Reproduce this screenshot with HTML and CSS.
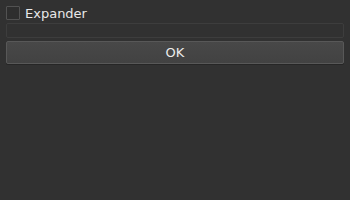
FILE: index.html
```html
<!DOCTYPE html>
<html>
<head>
    <title>Expander</title>
    <link rel="stylesheet" href="styles.css">
</head>
<body>
    <div class="window">
        <label class="expander">
            <span class="check"></span>
            <span class="label">Expander</span>
        </label>
        <div class="frame"></div>
        <button type="button" class="ok">OK</button>
    </div>
</body>
</html>
```

FILE: styles.css
```css
body {
    margin: 0;
    padding: 0;
    background-color: #313131;
    font-family: "DejaVu Sans", sans-serif;
    font-size: 13px;
    color: #e8e8e8;
}

.window {
    width: 350px;
    height: 200px;
    box-sizing: border-box;
    padding: 6px 6px 0 6px;
    display: flex;
    flex-direction: column;
}

.expander {
    display: flex;
    align-items: center;
    gap: 5px;
    height: 14px;
}

.check {
    width: 12px;
    height: 12px;
    border: 1px solid #525252;
    border-radius: 1px;
    background-color: #2e2e2e;
}

.label {
    line-height: 14px;
    padding-top: 1px;
}

.frame {
    margin-top: 3px;
    height: 13px;
    border: 1px solid #3d3d3d;
    border-radius: 2px;
}

.ok {
    margin-top: 3px;
    height: 23px;
    border: 1px solid #585858;
    border-radius: 2px;
    background: linear-gradient(#484848, #424242);
    color: #ececec;
    font-family: "DejaVu Sans", sans-serif;
    font-size: 13px;
    padding: 0;
    box-shadow: 0 1px 0 #262626;
}
```
